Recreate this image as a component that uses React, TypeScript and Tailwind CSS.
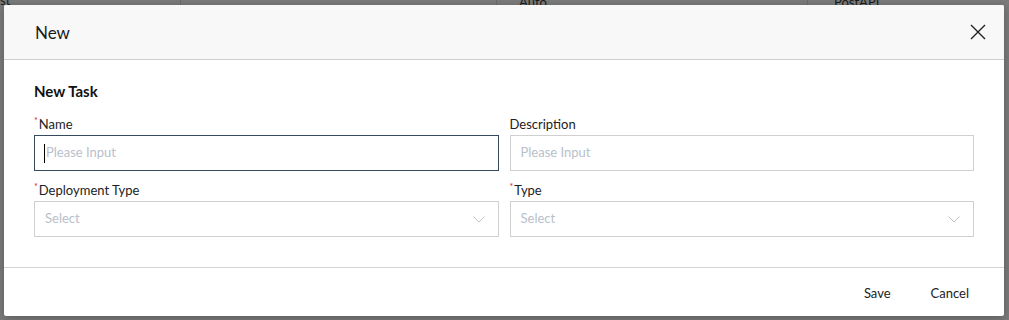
import React from "react";

const Field = ({ label, required, placeholder, select, focused }: { label: string; required?: boolean; placeholder: string; select?: boolean; focused?: boolean }) => {
  return (
    <div className="flex flex-col">
      <label className="text-[13px] leading-[16px] text-[#222] mb-[3px] flex">
        {required && <span className="text-[#e02020] text-[9px] leading-[10px] mr-[1px]">*</span>}
        {label}
      </label>
      <div
        className={
          "h-[36px] flex items-center px-[10px] bg-white border " +
          (focused ? "border-[#364a5e]" : "border-[#d0d0d0]")
        }
      >
        {focused && <span className="w-px h-[19px] bg-black -ml-[1px] mr-px" />}
        <span className="text-[13px] text-[#b9c0cb] flex-1">{placeholder}</span>
        {select && (
          <svg width="12" height="7" viewBox="0 0 12 7" className="mr-[3px]">
            <path d="M0.5 0.5 L6 6 L11.5 0.5" fill="none" stroke="#c4c4c4" strokeWidth="1" />
          </svg>
        )}
      </div>
    </div>
  );
};

export default function App() {
  return (
    <div className="relative w-[1009px] h-[320px] bg-[#7a7a7a] overflow-hidden" style={{ fontFamily: "Lato, 'Liberation Sans', sans-serif" }}>
      {/* table underneath */}
      <div className="flex h-[6px] text-[13px] text-[#1a1a1a] leading-none">
        <div className="w-[181px] border-r border-[#6a6a6a] -mt-[6px]">st</div>
        <div className="w-[316px] border-r border-[#6a6a6a]" />
        <div className="w-[311px] border-r border-[#6a6a6a] pl-[22px] -mt-[4px]">Auto</div>
        <div className="pl-[26px] -mt-[4px]">PostAPI</div>
      </div>

      <div className="absolute left-[4px] top-[5px] w-[1000px] h-[311px] bg-white rounded-[2px] shadow-[0_2px_8px_rgba(0,0,0,0.25)] flex flex-col">
        <div className="h-[55px] bg-[#f8f8f8] border-b border-[#cfcfcf] flex items-center justify-between pl-[31px] pr-[18px] pt-[2px] rounded-t-[2px]">
          <span className="text-[17px] text-[#1a1a1a]">New</span>
          <svg width="16" height="16" viewBox="0 0 16 16" className="-mt-[2px]">
            <path d="M1 1 L15 15 M15 1 L1 15" stroke="#222" strokeWidth="1.4" fill="none" />
          </svg>
        </div>

        <div className="px-[30px] pt-[21px] h-[208px] border-b border-[#d4d4d4]">
          <div className="text-[15px] font-bold text-[#111] leading-[20px] mb-[15px]">New Task</div>
          <div className="grid grid-cols-2 gap-x-[11px] gap-y-[11px]">
            <Field label="Name" required placeholder="Please Input" focused />
            <Field label="Description" placeholder="Please Input" />
            <Field label="Deployment Type" required placeholder="Select" select />
            <Field label="Type" required placeholder="Select" select />
          </div>
        </div>

        <div className="flex-1 flex items-center justify-end pr-[35px] gap-[40px] text-[13px] text-[#222] pt-[3px]">
          <button>Save</button>
          <button>Cancel</button>
        </div>
      </div>
    </div>
  );
}
